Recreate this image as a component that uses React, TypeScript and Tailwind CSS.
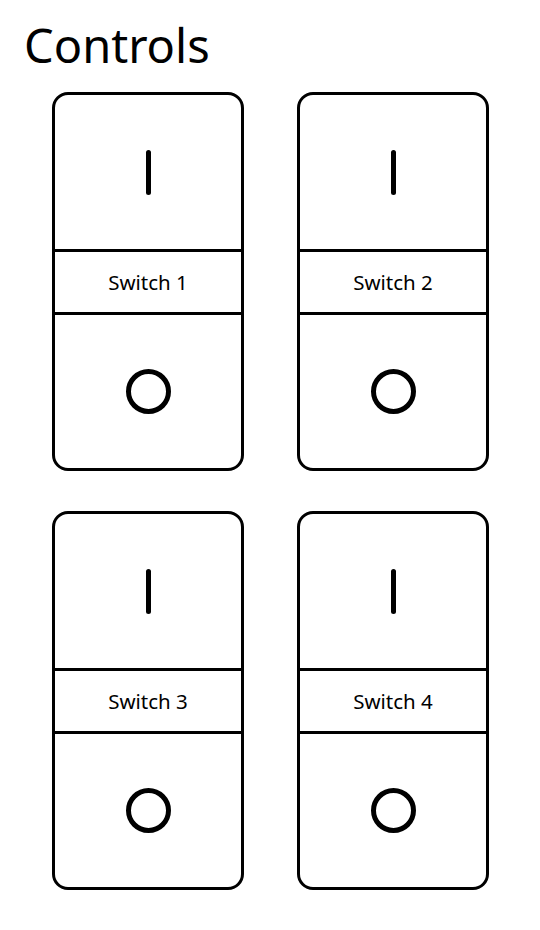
import React from "react";

function SwitchCard({ label }: { label: string }) {
  return (
    <div className="w-[192px] h-[379px] border-[3px] border-black rounded-[16px] flex flex-col overflow-hidden">
      <div className="h-[154px] flex items-center justify-center">
        <div className="w-[5px] h-[45px] bg-black rounded-full" />
      </div>
      <div className="h-[66px] border-y-[3px] border-black flex items-center justify-center text-[20.5px] text-black">
        {label}
      </div>
      <div className="flex-1 flex items-center justify-center">
        <div className="w-[45px] h-[45px] rounded-full border-[5px] border-black" />
      </div>
    </div>
  );
}

export default function App() {
  return (
    <div className="w-[540px] h-[930px] bg-white" style={{ fontFamily: '"Noto Sans", "Open Sans", sans-serif' }}>
      <div className="pl-[24px] pt-[16px] h-[92px] text-[47px] leading-[58px] text-black">Controls</div>
      <div className="grid grid-cols-[192px_192px] gap-x-[53px] gap-y-[40px] pl-[52px]">
        <SwitchCard label="Switch 1" />
        <SwitchCard label="Switch 2" />
        <SwitchCard label="Switch 3" />
        <SwitchCard label="Switch 4" />
      </div>
    </div>
  );
}
